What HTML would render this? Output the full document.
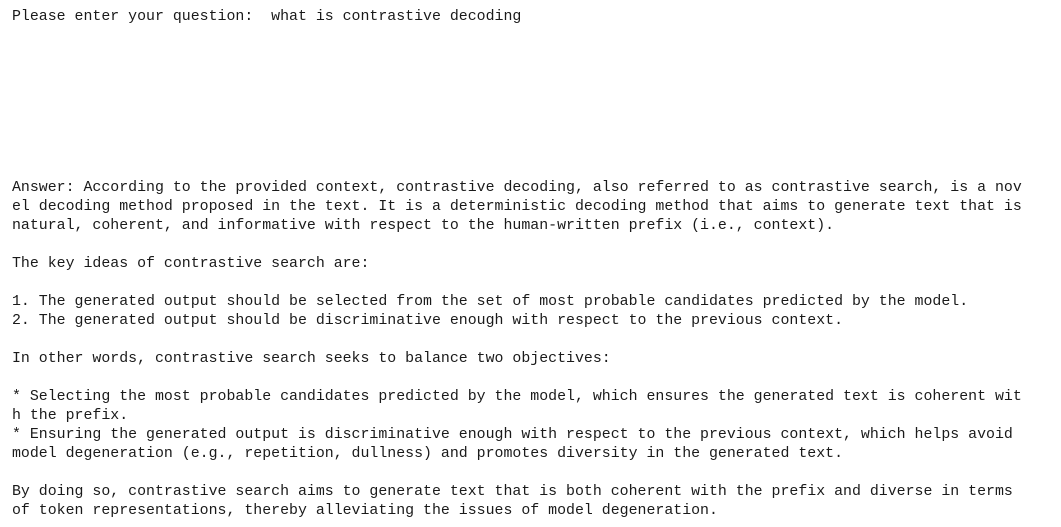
<!DOCTYPE html>
<html><head><meta charset="utf-8"><style>
html,body{margin:0;padding:0;background:#fff;width:1061px;height:527px;overflow:hidden}
pre{margin:0;padding:8px 0 0 12px;font-family:"Liberation Mono",monospace;font-size:14.9px;line-height:19px;color:#1a1a1a;white-space:pre}
</style></head><body><pre>Please enter your question:  what is contrastive decoding








Answer: According to the provided context, contrastive decoding, also referred to as contrastive search, is a nov
el decoding method proposed in the text. It is a deterministic decoding method that aims to generate text that is
natural, coherent, and informative with respect to the human-written prefix (i.e., context).

The key ideas of contrastive search are:

1. The generated output should be selected from the set of most probable candidates predicted by the model.
2. The generated output should be discriminative enough with respect to the previous context.

In other words, contrastive search seeks to balance two objectives:

* Selecting the most probable candidates predicted by the model, which ensures the generated text is coherent wit
h the prefix.
* Ensuring the generated output is discriminative enough with respect to the previous context, which helps avoid
model degeneration (e.g., repetition, dullness) and promotes diversity in the generated text.

By doing so, contrastive search aims to generate text that is both coherent with the prefix and diverse in terms
of token representations, thereby alleviating the issues of model degeneration.</pre></body></html>
